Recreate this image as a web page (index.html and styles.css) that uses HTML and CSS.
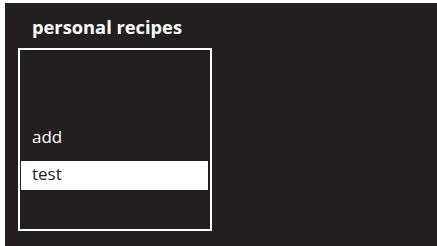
FILE: index.html
```html
<!DOCTYPE html>
<html>
<head>
<meta charset="utf-8">
<link rel="stylesheet" href="styles.css">
</head>
<body>
<div class="screen">
  <h1 class="title">personal recipes</h1>
  <div class="list">
    <div class="item">add</div>
    <div class="item selected">test</div>
  </div>
</div>
</body>
</html>
```
FILE: styles.css
```css
html, body {
  margin: 0;
  padding: 0;
  background: #ffffff;
  width: 437px;
  height: 246px;
  overflow: hidden;
}
body {
  padding: 3px 0 0 5px;
  box-sizing: border-box;
}
.screen {
  background: #231f20;
  width: 432px;
  height: 243px;
  padding-top: 11px;
  box-sizing: border-box;
  font-family: "Open Sans", "Liberation Sans", sans-serif;
  color: #ffffff;
}
.title {
  margin: 0 0 0 27px;
  font-size: 18.3px;
  font-weight: 700;
  line-height: 26px;
}
.list {
  margin: 8px 0 0 13px;
  width: 194px;
  height: 183px;
  box-sizing: border-box;
  border: 2px solid #ffffff;
  padding: 74px 2px 0 1px;
  display: flex;
  flex-direction: column;
  gap: 8px;
}
.item {
  height: 29px;
  line-height: 25px;
  padding: 0 0 4px 11px;
  box-sizing: border-box;
  font-size: 17px;
}
.item.selected {
  background: #ffffff;
  color: #231f20;
}
```
